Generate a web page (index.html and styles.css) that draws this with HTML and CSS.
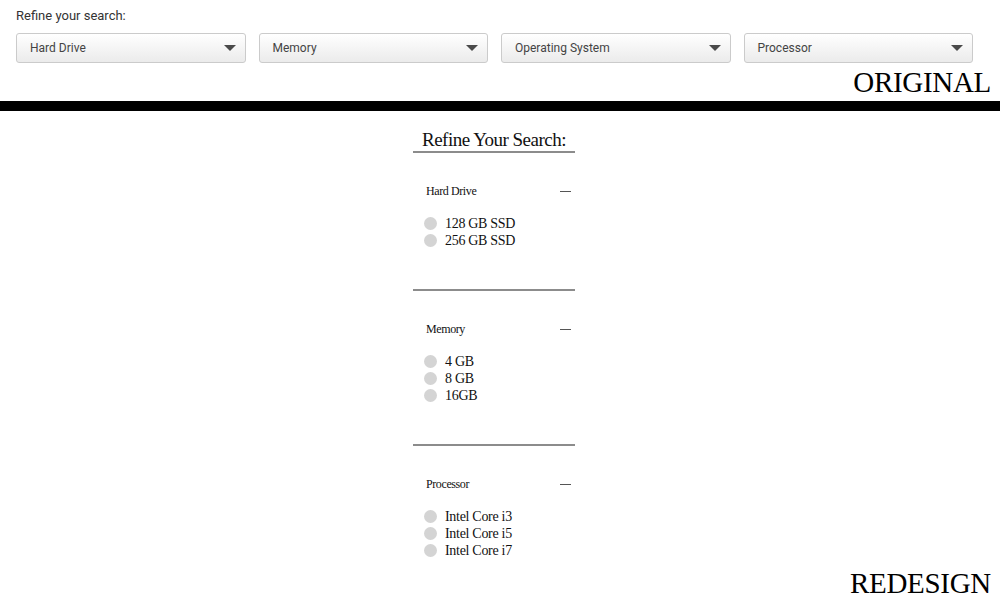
FILE: index.html
```html
<!DOCTYPE html>
<html lang="en">
<head>
<meta charset="utf-8">
<title>Refine your search</title>
<link rel="stylesheet" href="styles.css">
</head>
<body>
<header class="original">
  <p class="orig-label">Refine your search:</p>
  <div class="selects">
    <div class="select"><span>Hard Drive</span><span class="caret"></span></div>
    <div class="select"><span>Memory</span><span class="caret"></span></div>
    <div class="select"><span>Operating System</span><span class="caret"></span></div>
    <div class="select"><span>Processor</span><span class="caret"></span></div>
  </div>
  <div class="tag">ORIGINAL</div>
</header>
<div class="bar"></div>
<main class="redesign">
  <section class="panel">
    <h2 class="panel-title">Refine Your Search:</h2>
    <div class="group">
      <div class="group-head"><span>Hard Drive</span><span class="minus"></span></div>
      <ul class="options">
        <li><span class="dot"></span>128 GB SSD</li>
        <li><span class="dot"></span>256 GB SSD</li>
      </ul>
    </div>
    <div class="group">
      <div class="group-head"><span>Memory</span><span class="minus"></span></div>
      <ul class="options">
        <li><span class="dot"></span>4 GB</li>
        <li><span class="dot"></span>8 GB</li>
        <li><span class="dot"></span>16GB</li>
      </ul>
    </div>
    <div class="group last">
      <div class="group-head"><span>Processor</span><span class="minus"></span></div>
      <ul class="options">
        <li><span class="dot"></span>Intel Core i3</li>
        <li><span class="dot"></span>Intel Core i5</li>
        <li><span class="dot"></span>Intel Core i7</li>
      </ul>
    </div>
  </section>
  <div class="tag">REDESIGN</div>
</main>
</body>
</html>
```
FILE: styles.css
```css
* { box-sizing: border-box; }
html, body { margin: 0; padding: 0; background: #fff; }
body { width: 1000px; height: 600px; overflow: hidden; }

.original {
  padding: 8px 9px 4px 16px;
  height: 101px;
  display: flex;
  flex-direction: column;
}
.orig-label {
  margin: 0;
  font-family: Roboto, "Liberation Sans", sans-serif;
  font-size: 13px;
  line-height: 16px;
  color: #333;
}
.selects {
  margin-top: 9px;
  width: 957px;
  display: grid;
  grid-template-columns: repeat(4, 1fr);
  column-gap: 13px;
}
.select {
  height: 30px;
  border: 1px solid #cbcbcb;
  border-radius: 3px;
  background: linear-gradient(#ffffff, #ebebeb);
  display: flex;
  align-items: center;
  justify-content: space-between;
  padding: 0 9px 0 13px;
  font-family: Roboto, "Liberation Sans", sans-serif;
  font-size: 12px;
  color: #444;
}
.caret {
  width: 0;
  height: 0;
  border-left: 6px solid transparent;
  border-right: 6px solid transparent;
  border-top: 6px solid #4a4a4a;
  margin-top: -1px;
}
.tag {
  font-family: "Liberation Serif", serif;
  font-size: 29px;
  line-height: 30px;
  color: #000;
  text-align: right;
  letter-spacing: -0.3px;
}
.original .tag { margin-top: 4px; }

.bar { height: 10px; background: #000; }

.redesign {
  height: 489px;
  display: flex;
  flex-direction: column;
  padding: 17px 9px 2px 0;
}
.redesign .tag { margin-top: auto; }

.panel {
  margin-left: 413px;
  width: 162px;
  font-family: "Liberation Serif", serif;
  color: #111;
}
.panel-title {
  margin: 0;
  font-weight: normal;
  font-size: 19px;
  line-height: 23px;
  text-align: center;
  letter-spacing: -0.5px;
  border-bottom: 2px solid #8c8c8c;
}
.group {
  padding: 31px 0 40px 0;
  border-bottom: 2px solid #8c8c8c;
}
.group.last { border-bottom: none; padding-bottom: 0; }
.group-head {
  display: flex;
  justify-content: space-between;
  align-items: center;
  padding: 0 4px 0 13px;
  font-size: 12px;
  line-height: 14px;
  letter-spacing: -0.4px;
}
.minus {
  width: 11px;
  height: 1px;
  background: #555;
}
.options {
  list-style: none;
  margin: 17px 0 0 0;
  padding: 0 0 0 11px;
  font-size: 14px;
  line-height: 17px;
  letter-spacing: -0.3px;
}
.options li {
  display: flex;
  align-items: center;
  height: 17px;
}
.dot {
  width: 13px;
  height: 13px;
  border-radius: 50%;
  background: #d4d4d4;
  margin-right: 8px;
  flex: none;
}
```
